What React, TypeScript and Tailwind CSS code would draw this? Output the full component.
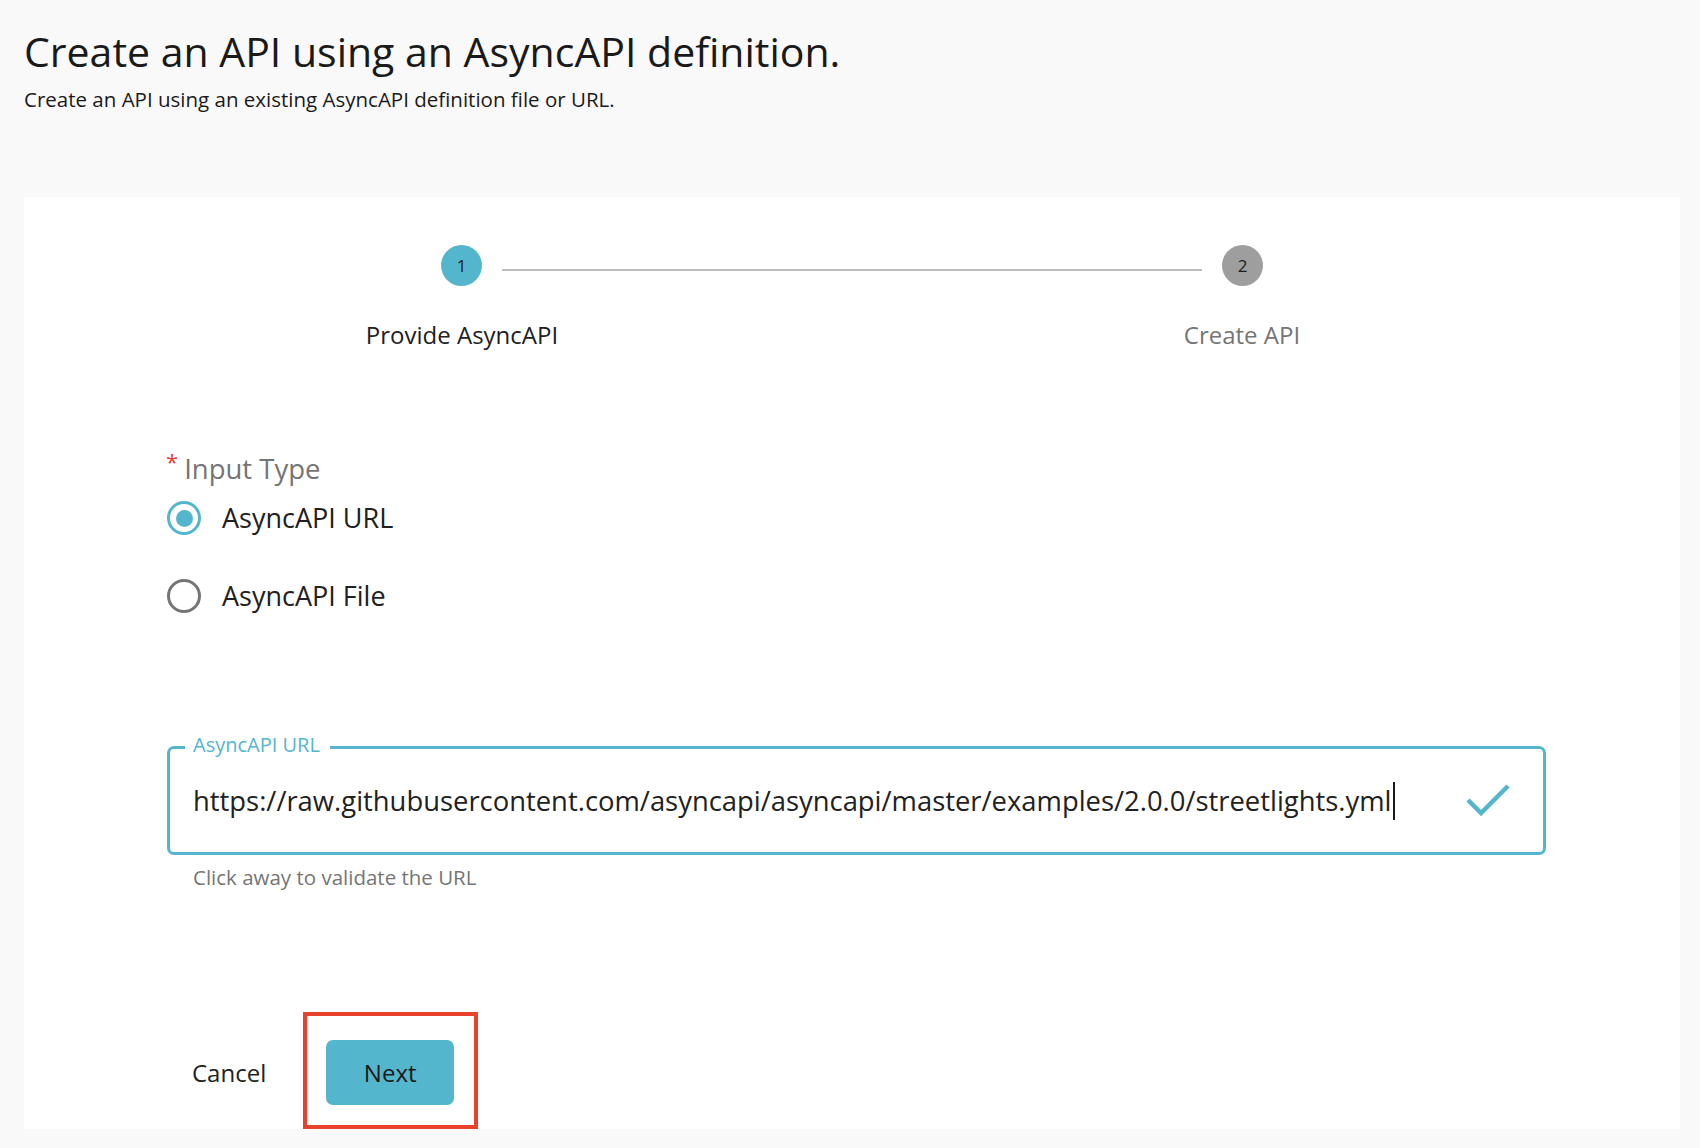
import React from 'react';

const TEAL = '#54b6cc';

const StepCircle = ({ n, active }: { n: number; active: boolean }) => (
    <div
        className={`flex h-[41px] w-[41px] shrink-0 items-center justify-center rounded-full text-[17px] text-[#1c1c1c] ${active ? 'bg-[#54b6cc]' : 'bg-[#9e9e9e]'}`}
    >
        {n}
    </div>
);

const Radio = ({ checked, label }: { checked: boolean; label: string }) => (
    <label className="flex h-[54px] items-center">
        <span
            className={`flex h-[34px] w-[34px] items-center justify-center rounded-full border-[3px] ${checked ? 'border-[#54b6cc]' : 'border-[#757575]'}`}
        >
            {checked && <span className="h-[17px] w-[17px] rounded-full bg-[#54b6cc]" />}
        </span>
        <span className="ml-[21px] text-[27px] leading-[36px] text-[#212121]">{label}</span>
    </label>
);

export default function App() {
    return (
        <div className="min-h-screen bg-[#f9f9f9] pb-[21px] pl-[24px] pr-[20px] pt-[27px] font-['Open_Sans',sans-serif] text-[#212121]">
            <header>
                <h1 className="text-[41px] leading-[48px] font-normal text-[#1a1a1a]">
                    Create an API using an AsyncAPI definition.
                </h1>
                <p className="mt-[12px] text-[20.5px] leading-[24px] text-[#1a1a1a]">
                    Create an API using an existing AsyncAPI definition file or URL.
                </p>
            </header>

            <main className="mt-[86px] bg-white px-[48px] pb-[24px] pt-[48px]">
                {/* stepper */}
                <div className="flex items-start">
                    <div className="flex-1" />
                    <StepCircle n={1} active />
                    <div className="mx-[20px] mt-[24px] h-[2px] w-[700px] bg-[#bdbdbd]" />
                    <StepCircle n={2} active={false} />
                    <div className="flex-1" />
                </div>
                <div className="mt-[32px] grid grid-cols-2 text-center text-[24px] leading-[34px]">
                    <div className="text-[#212121]">Provide AsyncAPI</div>
                    <div className="text-[#757575]">Create API</div>
                </div>

                {/* form */}
                <section className="ml-[95px] mt-[99px] w-[1379px]">
                    <div className="flex h-[36px] items-start">
                        <span className="-ml-[1px] mr-[6px] mt-[-2px] text-[22px] leading-[24px] text-[#e53935]">*</span>
                        <span className="text-[27.5px] leading-[36px] text-[#757575]">Input Type</span>
                    </div>
                    <div className="mt-[4px] flex flex-col gap-[24px]">
                        <Radio checked label="AsyncAPI URL" />
                        <Radio checked={false} label="AsyncAPI File" />
                    </div>

                    <div className="relative mt-[123px] flex h-[109px] items-center rounded-[7px] border-[3px] border-[#54b6cc] pl-[23px] pr-[33px]">
                        <span className="absolute -top-[16px] left-[15px] bg-white pl-[8px] pr-[10px] text-[20px] leading-[24px] text-[#54b6cc]">
                            AsyncAPI URL
                        </span>
                        <div className="flex flex-1 items-center text-[27.4px] leading-[36px] text-[#212121]">
                            <span>https://raw.githubusercontent.com/asyncapi/asyncapi/master/examples/2.0.0/streetlights.yml</span>
                            <span className="ml-[1px] h-[38px] w-[2px] bg-[#1a1a1a]" />
                        </div>
                        <svg width="44" height="34" viewBox="0 0 44 34" fill="none" stroke={TEAL} strokeWidth="4.5">
                            <polyline points="2,16 15,29 42,2" />
                        </svg>
                    </div>
                    <p className="ml-[26px] mt-[10px] text-[20.5px] leading-[24px] text-[#757575]">Click away to validate the URL</p>

                    <div className="mt-[151px] flex items-center">
                        <button className="ml-[25px] text-[24px] leading-[32px] text-[#212121]">Cancel</button>
                        <div className="relative ml-[60px]">
                            <button className="flex h-[65px] w-[128px] items-center justify-center rounded-[7px] bg-[#54b6cc] text-[24px] leading-[32px] text-[#1a1a1a]">
                                Next
                            </button>
                            <div className="pointer-events-none absolute -bottom-[24px] -left-[23px] -right-[24px] -top-[28px] border-[4px] border-[#e8412c]" />
                        </div>
                    </div>
                </section>
            </main>
        </div>
    );
}
